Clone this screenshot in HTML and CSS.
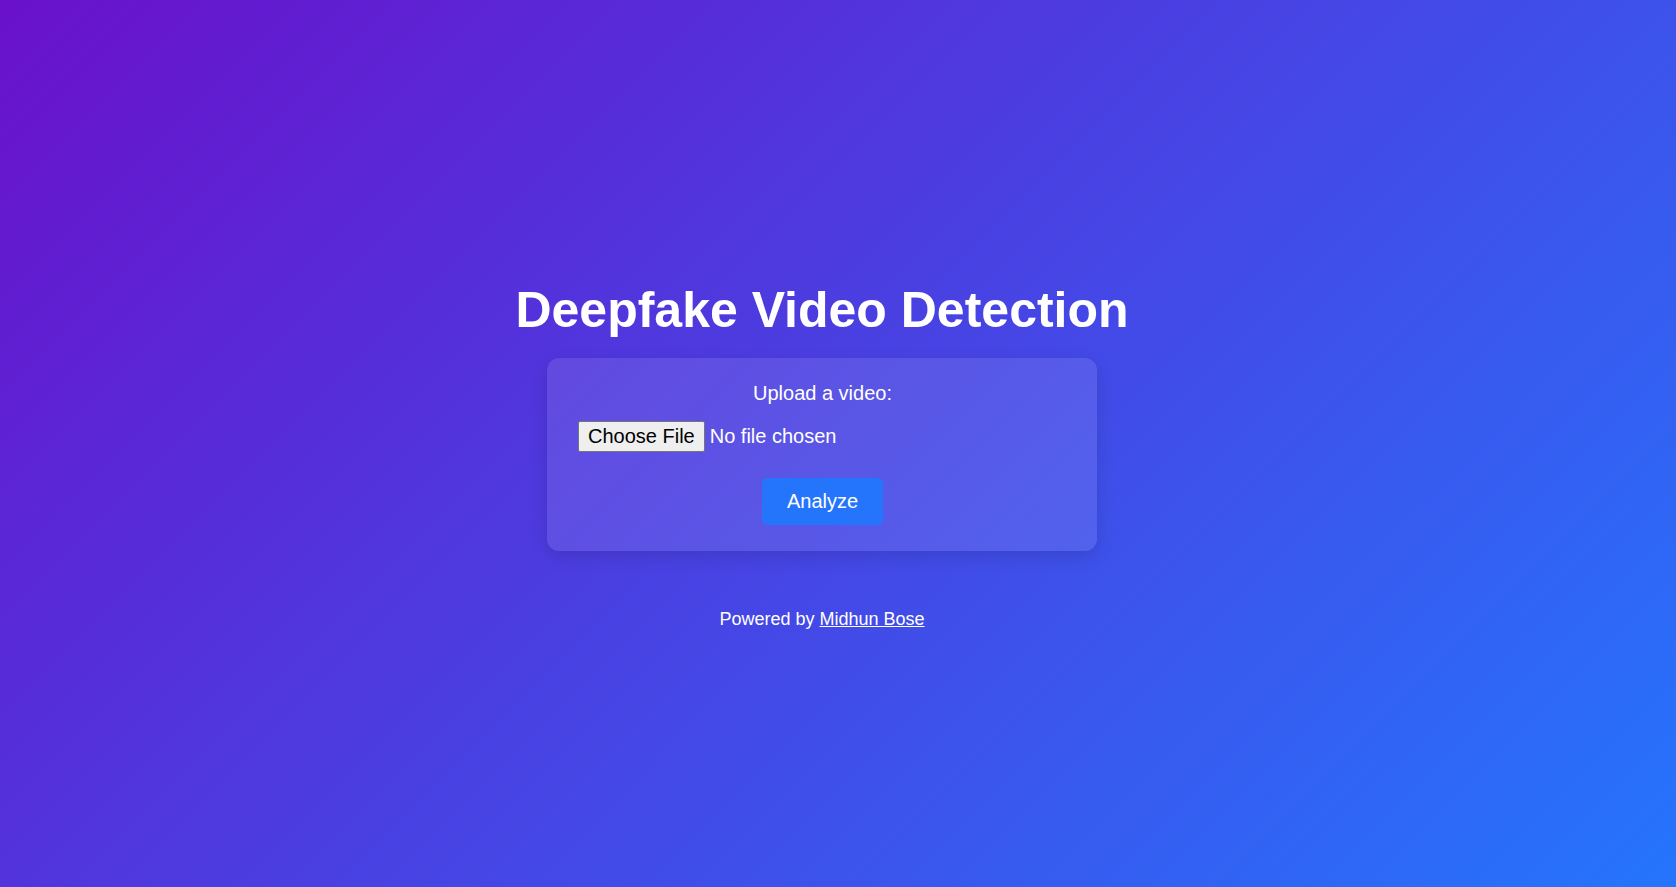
FILE: index.html
```html
<!DOCTYPE html>
<html lang="en">
<head>
<meta charset="utf-8">
<title>Deepfake Video Detection</title>
<link rel="stylesheet" href="styles.css">
</head>
<body>
<main class="page">
  <h1 class="title">Deepfake Video Detection</h1>
  <form class="card" onsubmit="return false;">
    <label class="card-label" for="video">Upload a video:</label>
    <input class="file-input" type="file" id="video" accept="video/*">
    <button class="analyze-btn" type="submit">Analyze</button>
  </form>
  <footer class="footer">Powered by <a class="footer-link" href="#">Midhun Bose</a></footer>
</main>
</body>
</html>
```

FILE: styles.css
```css
html, body {
  margin: 0;
  height: 100%;
}

body {
  background: linear-gradient(135deg, #6a11cb 0%, #2575fc 100%);
  font-family: "Liberation Sans", Arial, sans-serif;
  color: #fff;
  box-sizing: border-box;
  padding-right: 32px;
}

.page {
  min-height: 100%;
  display: flex;
  flex-direction: column;
  align-items: center;
  justify-content: center;
  box-sizing: border-box;
  padding-top: 24px;
}

.title {
  font-size: 50px;
  font-weight: bold;
  margin: 0 0 19px;
  line-height: normal;
}

.card {
  width: 550px;
  box-sizing: border-box;
  padding: 24px 30px 26px 31px;
  background: rgba(255, 255, 255, 0.1);
  border-radius: 12px;
  box-shadow: 0 6px 18px rgba(0, 0, 0, 0.12);
  text-align: center;
  font-size: 20px;
}

.card-label {
  display: block;
  margin-bottom: 16px;
}

.file-input {
  display: block;
  font-family: "Liberation Sans", Arial, sans-serif;
  font-size: 20px;
  color: #fff;
  text-align: left;
}

.file-input::file-selector-button {
  font-family: "Liberation Sans", Arial, sans-serif;
  font-size: 20px;
  background: #efefef;
  color: #000;
  border: 1px solid #767676;
  border-radius: 2px;
  padding: 3px 9px;
  margin-right: 5px;
}

.analyze-btn {
  margin-top: 26px;
  font-family: "Liberation Sans", Arial, sans-serif;
  font-size: 20px;
  color: #fff;
  background: #2575fc;
  border: none;
  border-radius: 5px;
  padding: 12px 25px;
  line-height: normal;
  cursor: pointer;
}

.footer {
  margin-top: 58px;
  font-size: 18px;
}

.footer-link {
  color: #fff;
  text-decoration: underline;
}
```
